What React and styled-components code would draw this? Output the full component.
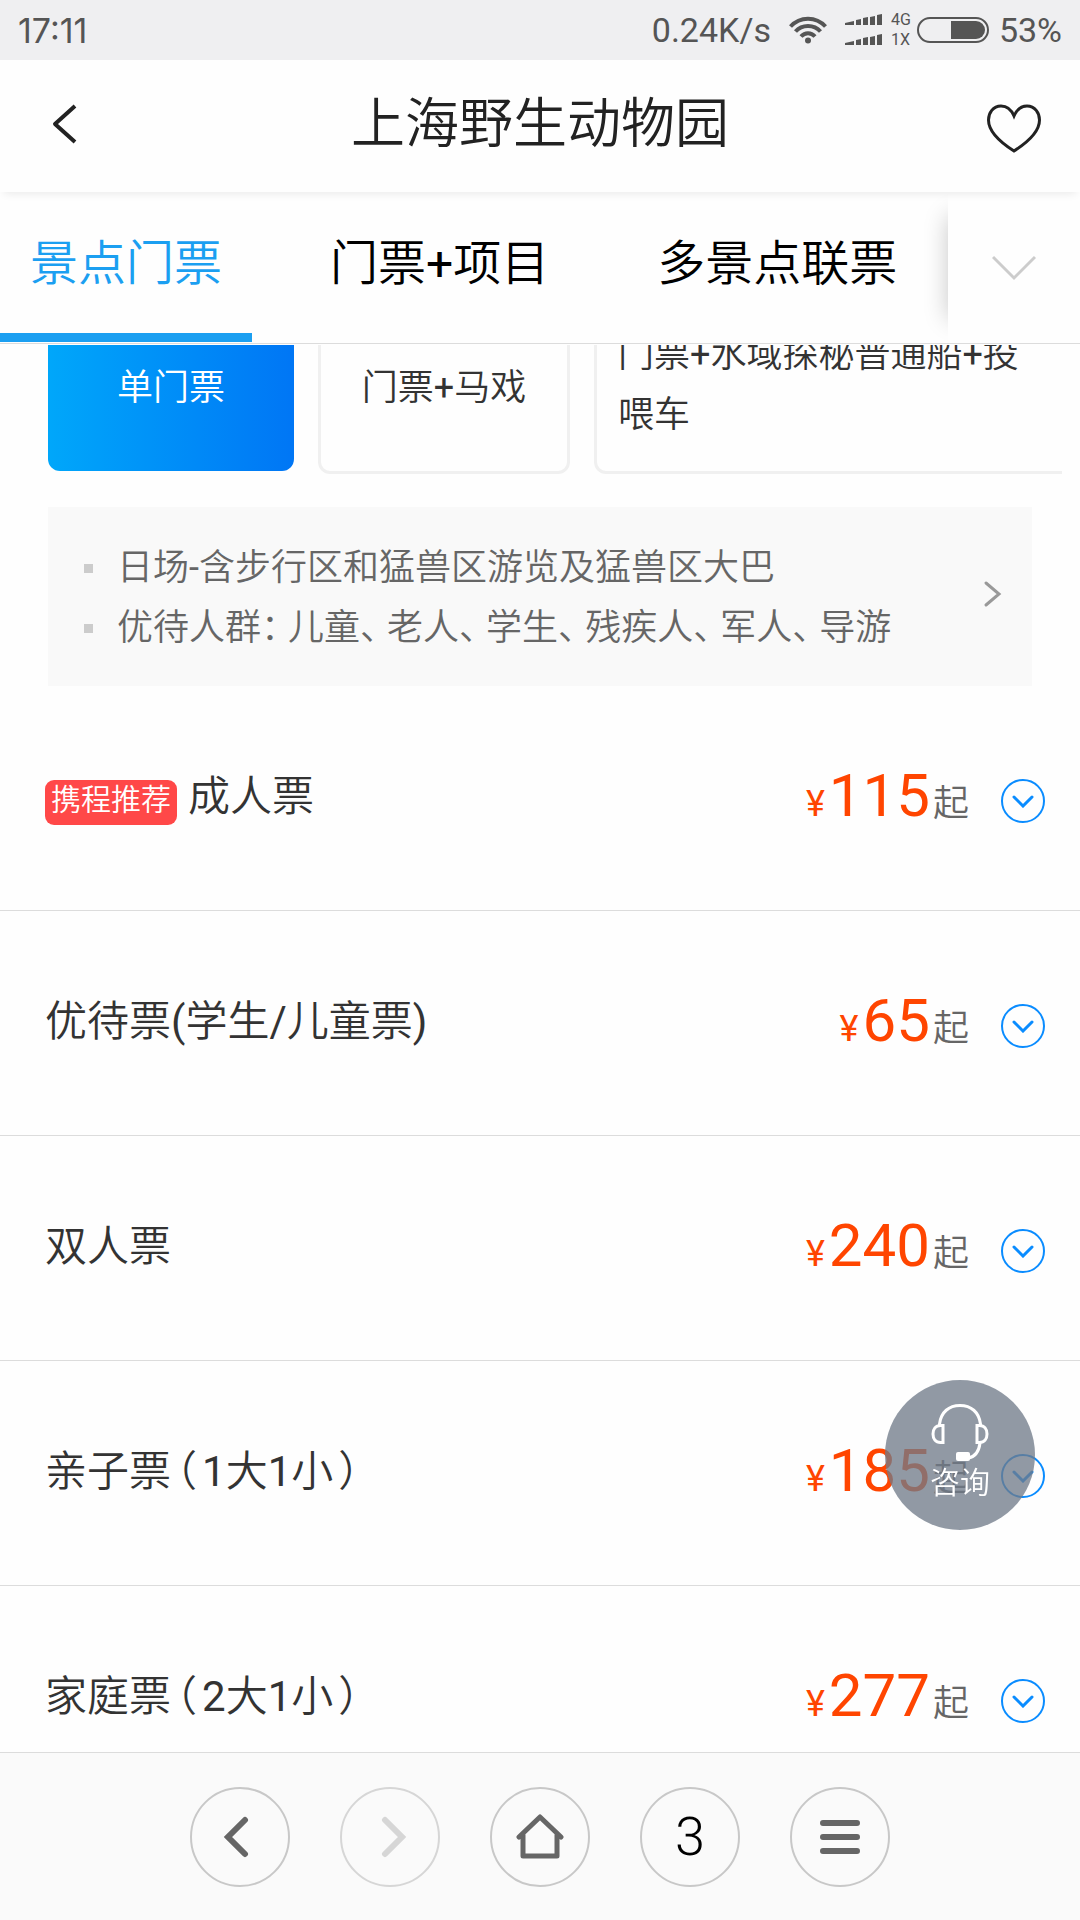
import React from 'react';
import styled, { createGlobalStyle, css } from 'styled-components'

const GlobalStyle = createGlobalStyle`
    * {
      box-sizing: border-box;
    }

    body {
      margin: 0;
      background: #fefefe;
      font-family: Roboto, "Noto Sans CJK SC DemiLight", "Noto Sans CJK SC", sans-serif;
      font-weight: 400;
      color: #333;
    }

    button {
      margin: 0;
      padding: 0;
      border: none;
      background: none;
      font: inherit;
      color: inherit;
    }

    svg {
      display: block;
      flex-shrink: 0;
    }
`

const Page = styled.div`
    display: flex;
    flex-direction: column;
    height: 100vh;
    overflow: hidden;
`

const StatusBar = styled.div`
    display: flex;
    flex-shrink: 0;
    align-items: center;
    justify-content: space-between;
    height: 60px;
    padding: 0 18px;
    background: #efeff1;
    font-size: 34px;
    color: #555;
`

const Clock = styled.time`
    font-family: Inter, sans-serif;
`

const StatusIcons = styled.div`
    display: flex;
    align-items: center;
`

const Speed = styled.span`
    margin-right: 18px;
`

const Signal = styled.div`
    display: flex;
    align-items: center;
    gap: 9px;
    margin: 0 6px 0 18px;
`

const Network = styled.div`
    font-size: 16px;
    line-height: 20px;
`

const Percent = styled.span`
    margin-left: 10px;
`

const Header = styled.header`
    display: flex;
    flex-shrink: 0;
    align-items: center;
    justify-content: space-between;
    height: 132px;
    padding: 0 36px 0 48px;
    background: #fefefe;
    color: #222;
    z-index: 1;
    box-shadow: 0 6px 8px -4px rgba(0, 0, 0, 0.08);
`

const Title = styled.h1`
    margin: 0;
    padding-bottom: 3px;
    font-size: 54px;
    font-weight: inherit;
    line-height: 66px;
`

const TabBar = styled.nav`
    display: flex;
    flex-shrink: 0;
    height: 152px;
    border-bottom: 1px solid #dcdcdc;
`

const TabList = styled.div`
    display: flex;
    flex: 1;
    gap: 48px;
    overflow: hidden;
`

const Tab = styled.button`
    flex-shrink: 0;
    height: 150px;
    padding: 2px 30px 0;
    border-bottom: 9px solid transparent;
    font-size: 48px;
    line-height: 60px;
    color: #000;

    ${props => props.$active && css`
      border-color: #1b9ff1;
      color: #1b9ff1;
    `}
`

const MoreTabs = styled.button`
    position: relative;
    display: flex;
    flex-shrink: 0;
    align-items: center;
    width: 132px;
    padding-left: 44px;

    &::before {
      content: '';
      position: absolute;
      top: 24px;
      bottom: 24px;
      left: 0;
      width: 30px;
      box-shadow: 0 0 24px rgba(0, 0, 0, 0.22);
    }

    &::after {
      content: '';
      position: absolute;
      inset: 0;
      background: #fefefe;
    }

    svg {
      position: relative;
      z-index: 1;
    }
`

const Content = styled.main`
    flex: 1;
    min-height: 0;
    padding-top: 1px;
    overflow: hidden;
`

/* scrolled part way under the tabs */
const CardStrip = styled.div`
    display: flex;
    align-items: flex-end;
    height: 129px;
    margin: 0 18px 0 48px;
    overflow: hidden;
`

const Cards = styled.div`
    display: flex;
    align-items: center;
    gap: 24px;
    height: 180px;
`

const Card = styled.button`
    flex-shrink: 0;
    width: 252px;
    height: 180px;
    padding: 8px 21px 0;
    border: 3px solid #f0f0f0;
    border-radius: 12px;
    font-size: 36px;
    line-height: 60px;

    ${props => props.$active && css`
      width: 246px;
      height: 174px;
      border: none;
      background: linear-gradient(to right, #00a7fa, #0076f5);
      color: #fff;
    `}

    ${props => props.$wide && css`
      width: 480px;
      padding-top: 2px;
      text-align: left;
    `}
`

const Notice = styled.section`
    display: flex;
    align-items: flex-start;
    justify-content: space-between;
    margin: 33px 48px 0;
    padding: 31px 30px 28px;
    background: #f9f9f9;
    color: #666;

    svg {
      margin-top: 41px;
    }
`

const NoticeList = styled.ul`
    margin: 0;
    padding: 0 0 0 6px;
    list-style: none;
`

const NoticeItem = styled.li`
    display: flex;
    align-items: center;
    gap: 24px;
    font-size: 36px;
    line-height: 60px;

    &::before {
      content: '';
      width: 9px;
      height: 9px;
      background: #ccc;
    }
`

/* full width punctuation, set tighter than the characters round it */
const Mark = styled.span`
    font-feature-settings: "halt";
    padding: ${props => props.$paren ? '0 5px' : '0 9px 0 0'};
`

const TicketList = styled.ul`
    margin: 0;
    padding: 0;
    list-style: none;
`

const Ticket = styled.li`
    display: flex;
    align-items: center;
    height: 225px;
    padding: 0 35px 0 45px;
    border-bottom: 1px solid #dcdcdc;
`

const Badge = styled.span`
    height: 45px;
    margin: 8px 11px 0 0;
    padding: 0 6px;
    border-radius: 9px;
    background: #ff4848;
    font-size: 30px;
    line-height: 40px;
    color: #fff;
`

const TicketName = styled.span`
    flex: 1;
    padding-bottom: 2px;
    font-size: 42px;
    line-height: 60px;
`

const Price = styled.span`
    display: flex;
    align-items: baseline;
    margin-right: 32px;
    padding-top: 4px;
    font-size: 36px;
    line-height: 60px;
    color: #ff4500;
`

const Amount = styled.span`
    margin: 0 3px 0 4px;
    font-size: 60px;
`

const From = styled.span`
    color: #666;
`

const Expand = styled.button`
    display: flex;
    align-items: center;
    justify-content: center;
    width: 44px;
    height: 44px;
    margin-top: 6px;
    border: 2px solid #0a8cff;
    border-radius: 50%;
    color: #0a8cff;
`

const Consult = styled.button`
    position: fixed;
    right: 45px;
    bottom: 390px;
    display: flex;
    flex-direction: column;
    align-items: center;
    width: 150px;
    height: 150px;
    padding-top: 24px;
    border-radius: 50%;
    background: rgba(112, 122, 137, 0.77);
    font-size: 30px;
    line-height: 42px;
    color: #fff;
`

const BottomBar = styled.footer`
    display: flex;
    flex-shrink: 0;
    align-items: center;
    justify-content: center;
    gap: 50px;
    height: 168px;
    border-top: 1px solid #dcdcdc;
    background: #fafafa;
`

const RoundButton = styled.button`
    display: flex;
    align-items: center;
    justify-content: center;
    width: 100px;
    height: 100px;
    border: 2px solid #c8c8c8;
    border-radius: 50%;
    color: #666;

    &:disabled {
      border-color: #d6d6d6;
      color: #d6d6d6;
    }
`

const PageCount = styled.span`
    font-size: 54px;
    font-weight: 300;
    color: #000;
`

const Wifi = () => (
    <svg width="38" height="28" viewBox="0 0 38 28" fill="none" stroke="currentColor" strokeWidth="4">
        <path d="M1.5 10.5C11 0 27 0 36.500 10.500" />
        <path d="M6.500 15.500C13 8 25 8 31.500 15.500" />
        <path d="M12 20.500C16 16 22 16 26 20.500" />
        <circle cx="19" cy="24.500" r="3" fill="currentColor" stroke="none" />
    </svg>
)

const bars = 'M0 9L9 7V11H0ZM11 6L16 5V11H11ZM18 4L23 3V11H18ZM25 3L30 2V11H25ZM32 1L37 0V11H32Z'

const SignalBars = () => (
    <svg width="37" height="32" viewBox="0 0 37 32" fill="currentColor">
        <path d={bars} />
        <path d={bars} transform="translate(0 20)" />
    </svg>
)

const Battery = () => (
    <svg width="72" height="26" viewBox="0 0 72 26">
        <rect x="1" y="1" width="70" height="24" rx="12" fill="none" stroke="currentColor" strokeWidth="2" />
        <path d="M34 4H59A9 9 0 0 1 59 22H34Z" fill="currentColor" />
    </svg>
)

const Line = ({ d, width, height, stroke = 'currentColor', weight = 4, cap = 'round', join = 'miter' }) => (
    <svg width={width} height={height} viewBox={`0 0 ${width} ${height}`} fill="none" stroke={stroke}
        strokeWidth={weight} strokeLinecap={cap} strokeLinejoin={join}>
        <path d={d} />
    </svg>
)

const Headset = () => (
    <svg width="58" height="58" viewBox="0 0 58 58" fill="none" stroke="currentColor" strokeWidth="3">
        <path d="M8.500 21V20C10 8 18 1.500 29 1.500S48 8 49.500 20V21" />
        <path d="M12 21.500V38.500H9.500C4.500 38.500 2 35 2 30S4.500 21.500 9.500 21.500Z" />
        <path d="M46 21.500V38.500H48.500C53.500 38.500 56 35 56 30S53.500 21.500 48.500 21.500Z" />
        <path d="M49 39C48 47 44 53 37 54" />
        <rect x="25" y="48" width="14" height="9" rx="2" fill="currentColor" stroke="none" />
    </svg>
)

const tickets = [
    { name: '成人票', price: 115, badge: '携程推荐' },
    { name: '优待票(学生/儿童票)', price: 65 },
    { name: '双人票', price: 240 },
    { name: '亲子票（1大1小）', price: 185 },
    { name: '家庭票（2大1小）', price: 277 },
]

const Text = ({ children }) => children.split(/([（）：、])/).map((part, i) => (
    i % 2 ? <Mark key={i} $paren={/[（）]/.test(part)}>{part}</Mark> : part
))

export default function App() {
    return (
        <Page>
            <GlobalStyle />
            <StatusBar>
                <Clock>17:11</Clock>
                <StatusIcons>
                    <Speed>0.24K/s</Speed>
                    <Wifi />
                    <Signal>
                        <SignalBars />
                        <Network>4G<br />1X</Network>
                    </Signal>
                    <Battery />
                    <Percent>53%</Percent>
                </StatusIcons>
            </StatusBar>
            <Header>
                <button aria-label="返回">
                    <Line width={48} height={44} d="M27 2L7 20L27 38" cap="butt" join="round" />
                </button>
                <Title>上海野生动物园</Title>
                <button aria-label="收藏">
                    <Line width={60} height={54} weight={3}
                        d="M30 17C27 10 23 7 17 7C9 7 4.500 14 4.500 21C4.500 34 19 45 30 52C41 45 55.500 34 55.500 21C55.500 14 51 7 43 7C37 7 33 10 30 17Z" />
                </button>
            </Header>
            <TabBar>
                <TabList>
                    <Tab $active>景点门票</Tab>
                    <Tab>门票+项目</Tab>
                    <Tab>多景点联票</Tab>
                </TabList>
                <MoreTabs aria-label="更多">
                    <Line width={44} height={28} d="M1 3L22 24L43 3" stroke="#ccc" weight={3} cap="butt" />
                </MoreTabs>
            </TabBar>
            <Content>
                <CardStrip>
                    <Cards>
                        <Card $active>单门票</Card>
                        <Card>门票+马戏</Card>
                        <Card $wide>门票+水域探秘普通船+投喂车</Card>
                    </Cards>
                </CardStrip>
                <Notice>
                    <NoticeList>
                        <NoticeItem><span>日场-含步行区和猛兽区游览及猛兽区大巴</span></NoticeItem>
                        <NoticeItem><span><Text>优待人群：儿童、老人、学生、残疾人、军人、导游</Text></span></NoticeItem>
                    </NoticeList>
                    <Line width={20} height={30} d="M4 4L17 15L4 26" stroke="#999" weight={3} />
                </Notice>
                <TicketList>
                    {tickets.map(ticket => (
                        <Ticket key={ticket.name}>
                            {ticket.badge && <Badge>{ticket.badge}</Badge>}
                            <TicketName><Text>{ticket.name}</Text></TicketName>
                            <Price>¥<Amount>{ticket.price}</Amount><From>起</From></Price>
                            <Expand aria-label="展开">
                                <Line width={22} height={14} d="M2 3L11 12L20 3" weight={3} />
                            </Expand>
                        </Ticket>
                    ))}
                </TicketList>
            </Content>
            <Consult>
                <Headset />
                咨询
            </Consult>
            <BottomBar>
                <RoundButton aria-label="后退">
                    <Line width={34} height={42} d="M22 4L5 21L22 38" weight={6} />
                </RoundButton>
                <RoundButton aria-label="前进" disabled>
                    <Line width={34} height={42} d="M12 4L29 21L12 38" weight={6} />
                </RoundButton>
                <RoundButton aria-label="主页">
                    <Line width={48} height={46} d="M3 23L24 3L45 23M7 21V42H41V21" weight={5} join="round" />
                </RoundButton>
                <RoundButton><PageCount>3</PageCount></RoundButton>
                <RoundButton aria-label="菜单">
                    <Line width={40} height={36} d="M3 4H37M3 18H37M3 32H37" weight={6} />
                </RoundButton>
            </BottomBar>
        </Page>
    )
}
